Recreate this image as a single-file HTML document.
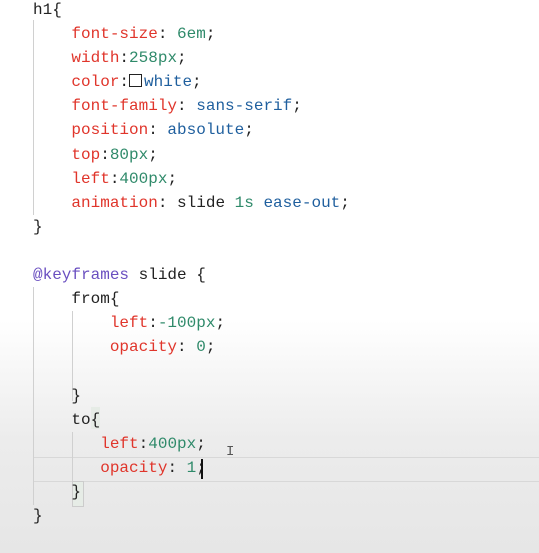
<!DOCTYPE html>
<html><head><style>
body{margin:0;width:539px;height:553px;overflow:hidden;background:linear-gradient(to bottom,#fff 0,#fff 320px,#ececec 440px,#e6e6e6 553px);position:relative}
pre{margin:0;position:absolute;left:33px;top:-2px;font:16px/24.1px "Liberation Mono",monospace;color:#222;white-space:pre}
.p{color:#e0352b}.n{color:#2f8a6a}.v{color:#1f5f9e}.a{color:#6a4fc0}
.g{position:absolute;width:1px;background:#d0d0d0}
.cur{position:absolute;left:33px;right:0;top:457px;height:23px;border-top:1px solid #d8d8d8;border-bottom:1px solid #d8d8d8}
.box{display:inline-block;width:11px;height:11px;border:1.5px solid #222;vertical-align:-1px;margin-right:2px}
</style></head><body>
<div class="cur"></div>
<div class="g" style="left:33px;top:20px;height:195px"></div>
<div class="g" style="left:33px;top:287px;height:218px"></div>
<div class="g" style="left:72px;top:311px;height:90px"></div>
<div class="g" style="left:72px;top:432px;height:72px"></div>
<div style="position:absolute;left:72px;top:481px;width:10px;height:24px;background:#e6ece6;border:1px solid #ccc"></div>
<div style="position:absolute;left:91px;top:407px;width:9px;height:22px;background:#e6ece6"></div>
<pre>h1{
    <span class="p">font-size</span>: <span class="n">6em</span>;
    <span class="p">width</span>:<span class="n">258px</span>;
    <span class="p">color</span>:<span class="box"></span><span class="v">white</span>;
    <span class="p">font-family</span>: <span class="v">sans-serif</span>;
    <span class="p">position</span>: <span class="v">absolute</span>;
    <span class="p">top</span>:<span class="n">80px</span>;
    <span class="p">left</span>:<span class="n">400px</span>;
    <span class="p">animation</span>: slide <span class="n">1s</span> <span class="v">ease-out</span>;
}

<span class="a">@keyframes</span> slide {
    from{
        <span class="p">left</span>:<span class="n">-100px</span>;
        <span class="p">opacity</span>: <span class="n">0</span>;

    }
    to{
       <span class="p">left</span>:<span class="n">400px</span>;
       <span class="p">opacity</span>: <span class="n">1</span>;
    }
}</pre>
<div style="position:absolute;left:201px;top:459px;width:2px;height:20px;background:#111"></div>
<div style="position:absolute;left:226px;top:444px;font:14px 'Liberation Mono',monospace;color:#555">I</div>
</body></html>
